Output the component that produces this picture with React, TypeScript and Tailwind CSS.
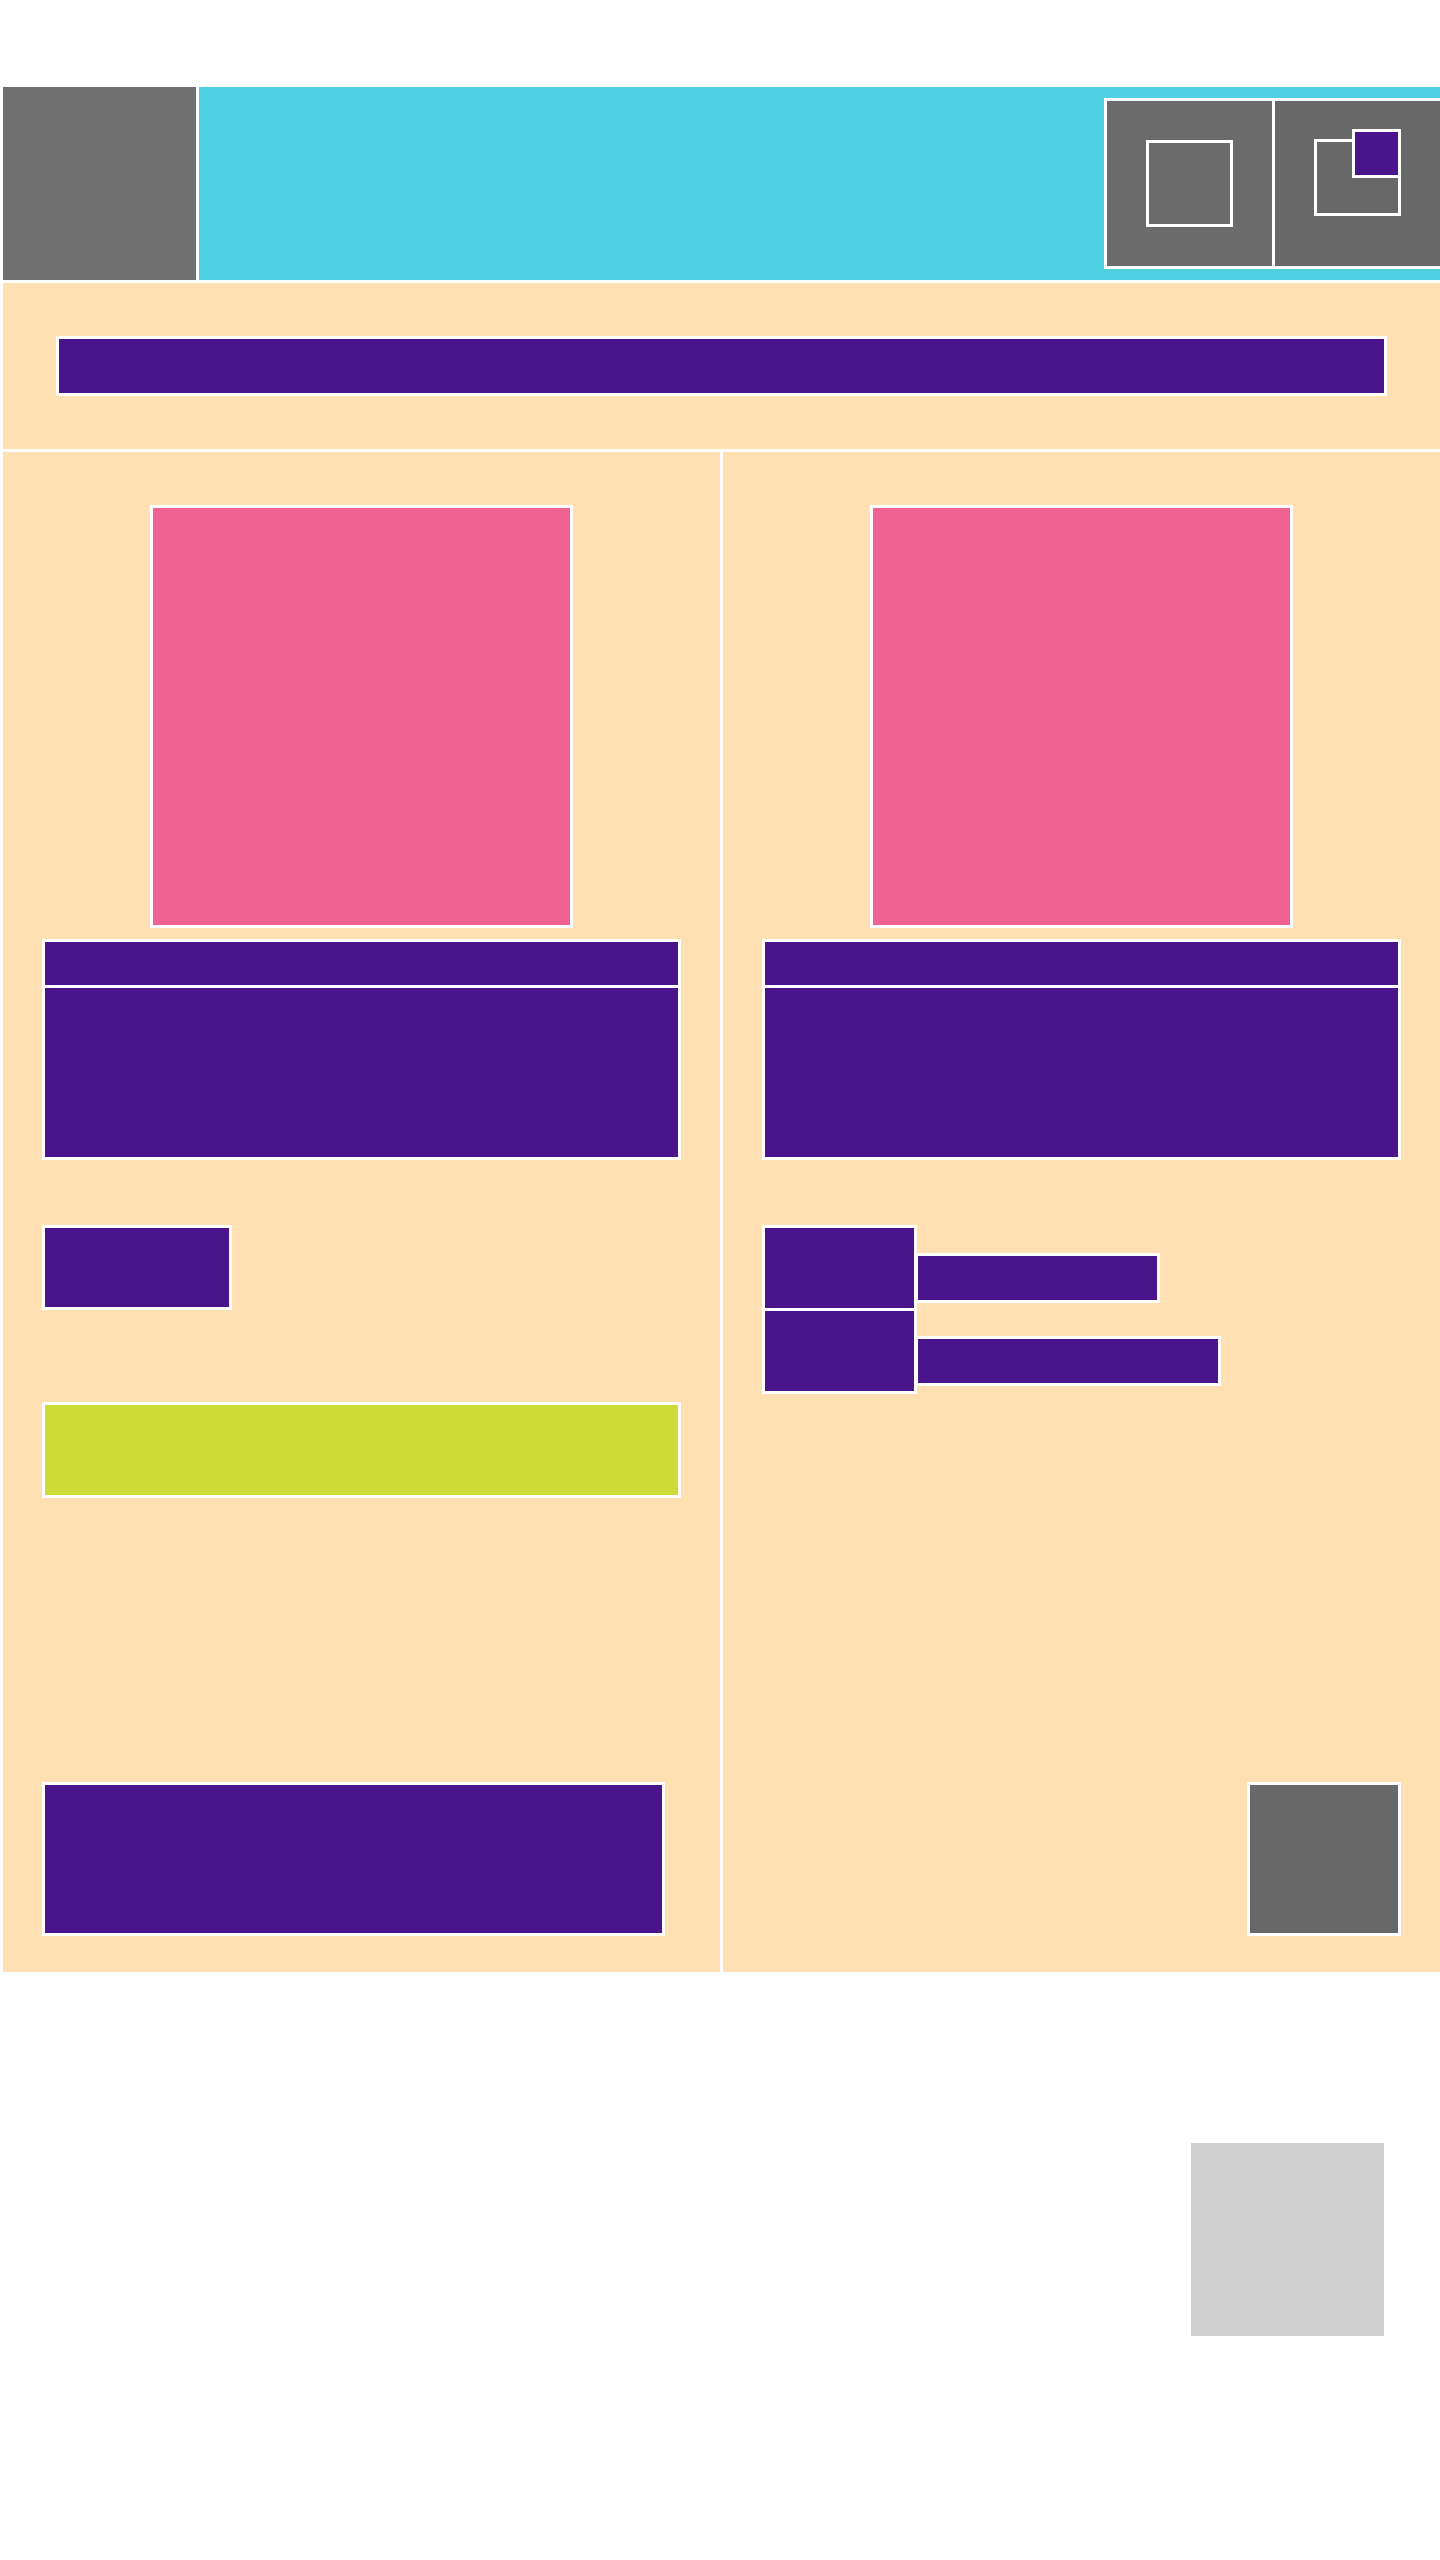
import React from 'react';

const box = 'border-[3px] border-white';

function WindowIcon() {
  return (
    <svg width="87" height="87" viewBox="0 0 87 87" fill="none">
      <rect x="1.5" y="1.5" width="84" height="84" stroke="#fff" strokeWidth="3" />
    </svg>
  );
}

function PopOutIcon() {
  return (
    <svg width="87" height="87" viewBox="0 0 87 87" fill="none">
      <rect x="1.5" y="11.5" width="84" height="74" stroke="#fff" strokeWidth="3" />
      <rect x="39.5" y="1.5" width="46" height="46" fill="#4a148c" stroke="#fff" strokeWidth="3" />
    </svg>
  );
}

function Card({ children }: { children?: React.ReactNode }) {
  return (
    <div className="flex w-[717px] flex-col bg-[#ffe0b2] px-[39px] pt-[53px] pb-[36px]">
      <div className={`${box} h-[423px] w-[423px] self-center bg-[#f06292]`} />
      <div className={`${box} mt-[11px] h-[49px] bg-[#4a148c]`} />
      <div className={`${box} h-[172px] border-t-0 bg-[#4a148c]`} />
      {children}
    </div>
  );
}

export default function App() {
  return (
    <div className="flex h-[2560px] w-[1440px] flex-col gap-[3px] bg-white pt-[87px] pl-[3px]">
      {/* header */}
      <div className="flex h-[193px] gap-[3px]">
        <div className="w-[193px] bg-[#707070]" />
        <div className="flex flex-1 items-center justify-end bg-[#4dd0e1]">
          <div className="flex border-[3px] border-r-0 border-white bg-white">
            <button className="flex h-[165px] w-[165px] justify-center bg-[#6b6b6b] pt-[39px]">
              <WindowIcon />
            </button>
            <div className="w-[3px]" />
            <button className="flex h-[165px] w-[165px] justify-center bg-[#686868] pt-[28px]">
              <PopOutIcon />
            </button>
          </div>
        </div>
      </div>

      {/* search */}
      <div className="h-[166px] bg-[#ffe0b2] p-[53px]">
        <div className={`${box} h-[60px] bg-[#4a148c]`} />
      </div>

      {/* two cards */}
      <div className="flex h-[1520px] gap-[3px]">
        <Card>
          <div className={`${box} mt-[65px] h-[85px] w-[190px] bg-[#4a148c]`} />
          <div className={`${box} mt-[92px] h-[96px] bg-[#cddc39]`} />
          <div className={`${box} mt-auto h-[154px] w-[623px] bg-[#4a148c]`} />
        </Card>
        <Card>
          <div className="mt-[65px] flex h-[86px] items-start">
            <div className={`${box} h-[86px] w-[155px] bg-[#4a148c]`} />
            <div className={`${box} -ml-[2px] mt-[28px] h-[50px] w-[245px] bg-[#4a148c]`} />
          </div>
          <div className="flex h-[83px] items-start">
            <div className={`${box} h-[83px] w-[155px] border-t-0 bg-[#4a148c]`} />
            <div className={`${box} -ml-[2px] mt-[25px] h-[50px] w-[306px] bg-[#4a148c]`} />
          </div>
          <div className={`${box} mt-auto h-[154px] w-[154px] self-end bg-[#686868]`} />
        </Card>
      </div>

      {/* footer */}
      <div className="flex justify-end pt-[168px] pr-[56px]">
        <div className="h-[193px] w-[193px] bg-[#d0d0d0]" />
      </div>
    </div>
  );
}
